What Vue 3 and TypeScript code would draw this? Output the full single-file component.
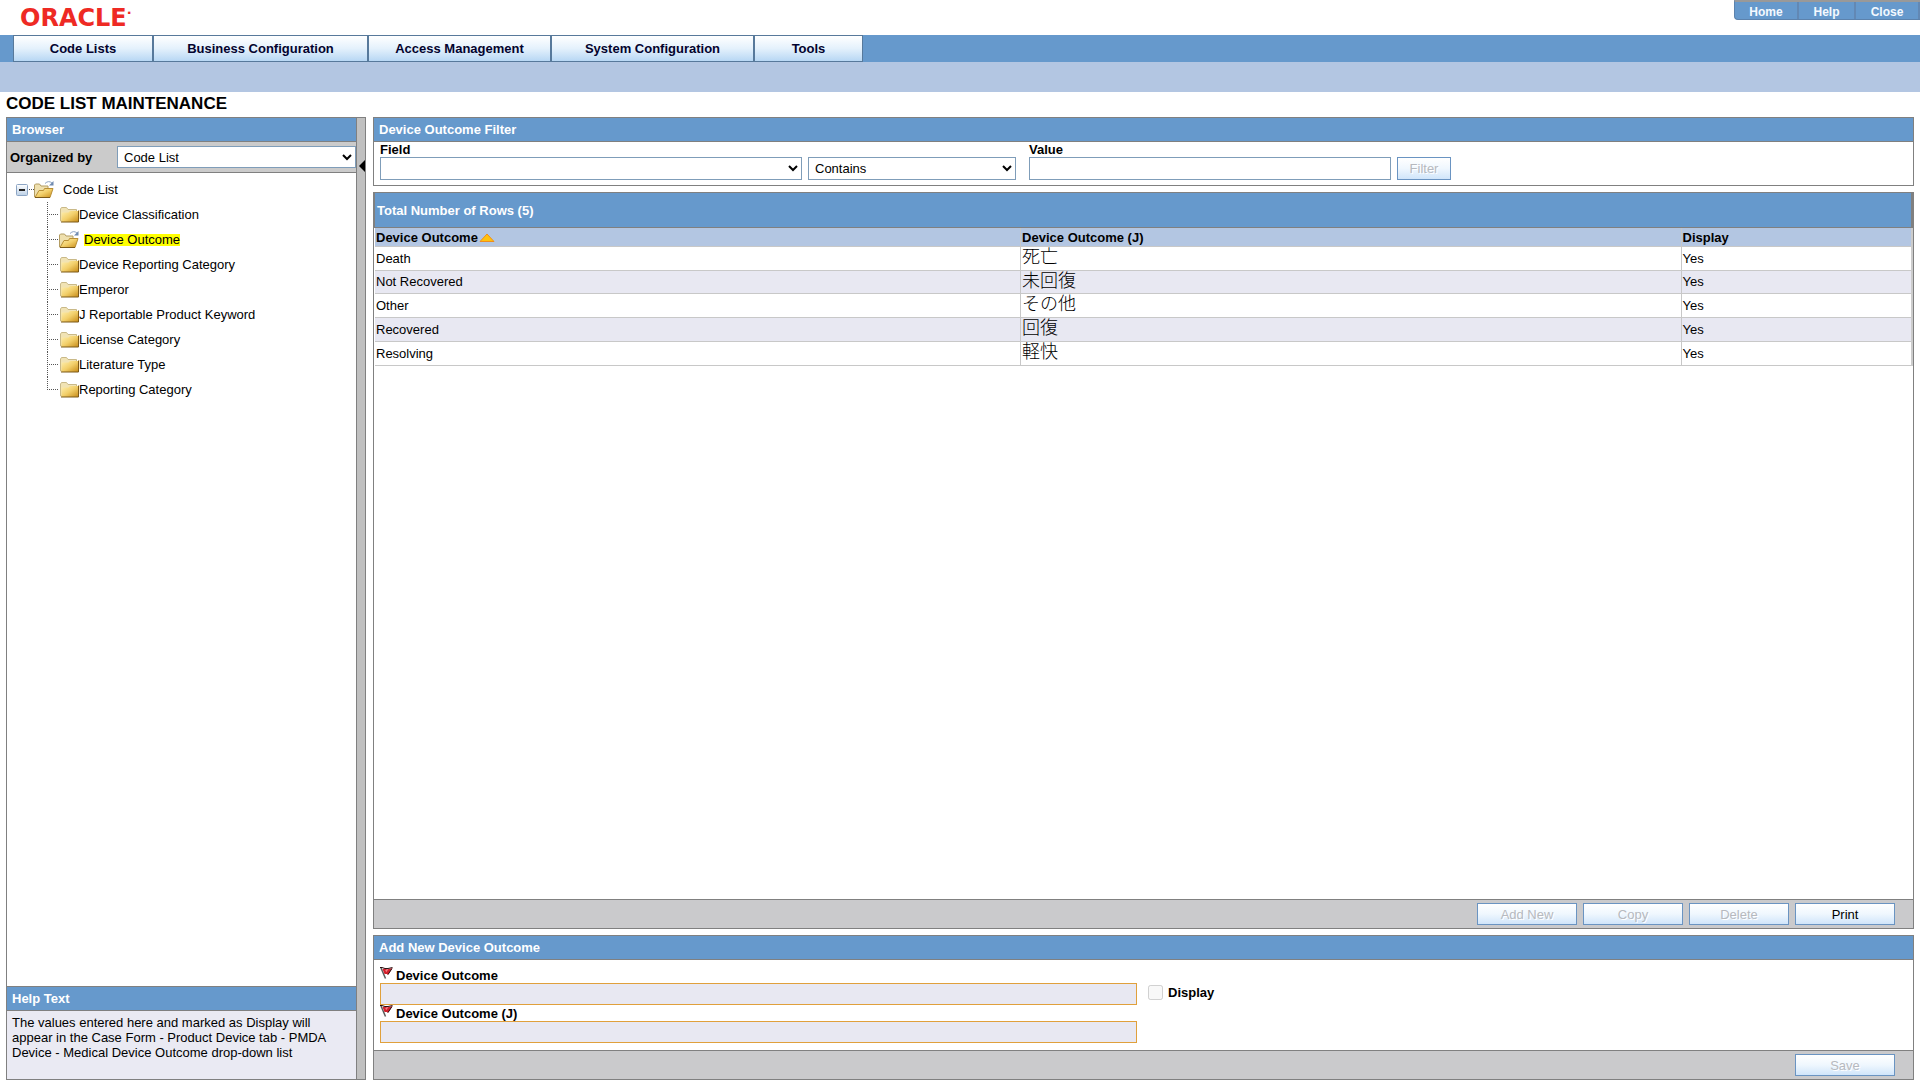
<script setup lang="ts">
import { ref } from 'vue'

interface Tab { label: string; width: number }
interface OutcomeRow { name: string; nameJ: string; display: string }

const links: string[] = ['Home', 'Help', 'Close']
const tabs: Tab[] = [
  { label: 'Code Lists', width: 140 },
  { label: 'Business Configuration', width: 215 },
  { label: 'Access Management', width: 183 },
  { label: 'System Configuration', width: 203 },
  { label: 'Tools', width: 109 },
]
const nodes: string[] = [
  'Device Classification',
  'Device Outcome',
  'Device Reporting Category',
  'Emperor',
  'J Reportable Product Keyword',
  'License Category',
  'Literature Type',
  'Reporting Category',
]
const selected = ref('Device Outcome')
const rows: OutcomeRow[] = [
  { name: 'Death', nameJ: '死亡', display: 'Yes' },
  { name: 'Not Recovered', nameJ: '未回復', display: 'Yes' },
  { name: 'Other', nameJ: 'その他', display: 'Yes' },
  { name: 'Recovered', nameJ: '回復', display: 'Yes' },
  { name: 'Resolving', nameJ: '軽快', display: 'Yes' },
]
const fields = [
  { id: 'outcome', label: 'Device Outcome' },
  { id: 'outcome-j', label: 'Device Outcome (J)' },
]
</script>

<template>
  <div class="page">
    <svg class="defs" width="0" height="0" aria-hidden="true">
      <defs>
        <linearGradient id="gold" x1="0" y1="0" x2="1" y2="1">
          <stop offset="0" stop-color="#fff0b0" />
          <stop offset="0.5" stop-color="#f2cf6a" />
          <stop offset="1" stop-color="#c88c18" />
        </linearGradient>
        <linearGradient id="box" x1="0" y1="0" x2="0" y2="1">
          <stop offset="0" stop-color="#ffffff" />
          <stop offset="1" stop-color="#bcd0e6" />
        </linearGradient>
        <symbol id="folder-open" viewBox="0 0 20 19">
          <path d="M0.500 17V5l1-1h4l1.500 2h7v4" fill="#efe0ae" stroke="#b39c62" />
          <path d="M1 17.500L5 10.500h4.500l1-2h8.500l-3 9z" fill="url(#gold)" stroke="#b98f35" />
          <path d="M1 17.500h15" stroke="#7d5a18" />
          <path d="M11 3.500q3.500-3.500 7-0.500" fill="none" stroke="#8ca2c2" />
          <path d="M19.500 1v4.500H15z" fill="#6f8ab0" />
        </symbol>
        <symbol id="folder" viewBox="0 0 19 16">
          <path d="M0.500 14V2l1-1.500h5l1.500 2h8.500v11z" fill="#f1e3b4" stroke="#c9b988" />
          <path d="M1.500 5.500h7l1.500-1.500h8v11H1.500z" fill="url(#gold)" />
          <path d="M1 15h17.500V3.500" fill="none" stroke="#7d5a18" />
        </symbol>
        <symbol id="flag" viewBox="0 0 13 12">
          <path d="M1 1l4.500 10.500" fill="none" stroke="#5a5a5a" stroke-width="1.500" />
          <path d="M2.500 2L5 1.500 7 2.500 12.500 1 8 8l-1-1H4.500z" fill="#d3202c" />
          <path d="M5 3.500l3-1-1.500 2.500z" fill="#f5858c" />
          <path d="M0 0.500h2l3 1h3l4.500-1M12 1.500L8 7.500" fill="none" stroke="#2a1011" />
        </symbol>
      </defs>
    </svg>

    <header class="top">
      <div class="logo">ORACLE<span>·</span></div>
      <nav class="links" aria-label="Session">
        <a v-for="link in links" :key="link" href="#">{{ link }}</a>
      </nav>
    </header>

    <nav class="tabs" aria-label="Main">
      <button v-for="tab in tabs" :key="tab.label" type="button" :style="{ width: tab.width + 'px' }">{{ tab.label }}</button>
    </nav>
    <div class="band"></div>
    <h1>CODE LIST MAINTENANCE</h1>

    <div class="work">
      <aside class="browser">
        <h2 class="bar">Browser</h2>
        <div class="organize">
          <label for="organized">Organized by</label>
          <select id="organized"><option>Code List</option></select>
        </div>
        <div class="tree">
          <div class="root">
            <svg class="toggle" viewBox="0 0 12 12" aria-hidden="true">
              <rect x="0.500" y="0.500" width="11" height="11" rx="1" fill="url(#box)" stroke="#8ca5c4" />
              <path d="M3 6h6" stroke="#222222" stroke-width="2" />
            </svg>
            <svg class="dash" viewBox="0 0 6 2" aria-hidden="true"><path d="M1 0.500h5" stroke="#555555" stroke-dasharray="1 1" /></svg>
            <svg class="open" aria-hidden="true"><use href="#folder-open" /></svg>
            <span class="root-name">Code List</span>
          </div>
          <div v-for="(node, i) in nodes" :key="node" class="node" @click="selected = node">
            <svg class="joint" viewBox="0 0 12 25" aria-hidden="true">
              <path :d="i === nodes.length - 1 ? 'M0.500 0v13' : 'M0.500 0v25'" stroke="#555555" stroke-dasharray="1 1" />
              <path d="M2 12.500h10" stroke="#555555" stroke-dasharray="1 1" />
            </svg>
            <template v-if="node === selected">
              <svg class="open" aria-hidden="true"><use href="#folder-open" /></svg>
              <a href="#" class="current">{{ node }}</a>
            </template>
            <template v-else>
              <svg class="closed" aria-hidden="true"><use href="#folder" /></svg>
              <a href="#">{{ node }}</a>
            </template>
          </div>
        </div>
        <h2 class="bar help-bar">Help Text</h2>
        <p class="help">The values entered here and marked as Display will appear in the Case Form - Product Device tab - PMDA Device - Medical Device Outcome drop-down list</p>
      </aside>

      <div class="splitter">
        <svg viewBox="0 0 6 12" aria-hidden="true"><path d="M6 0v12L0 6z" fill="#000000" /></svg>
      </div>

      <main>
        <section class="panel">
          <h2 class="bar">Device Outcome Filter</h2>
          <div class="filter">
            <div class="cell field">
              <label for="field">Field</label>
              <select id="field"><option></option></select>
            </div>
            <select class="operator" aria-label="Operator"><option>Contains</option></select>
            <div class="cell value">
              <label for="value">Value</label>
              <input id="value" type="text">
            </div>
            <button class="btn filter-btn" type="button" disabled>Filter</button>
          </div>
        </section>

        <section class="panel grid">
          <h2 class="bar total">Total Number of Rows (5)</h2>
          <div class="scroll">
            <table>
              <thead>
                <tr>
                  <th scope="col">Device Outcome<svg class="sort" viewBox="0 0 16 9" aria-hidden="true"><path d="M8 1l7 7.500H1z" fill="#ffc20e" stroke="#ee8d1c" /></svg></th>
                  <th scope="col">Device Outcome (J)</th>
                  <th scope="col">Display</th>
                </tr>
              </thead>
              <tbody>
                <tr v-for="row in rows" :key="row.name">
                  <td>{{ row.name }}</td>
                  <td lang="ja" class="ja">{{ row.nameJ }}</td>
                  <td>{{ row.display }}</td>
                </tr>
              </tbody>
            </table>
          </div>
          <div class="actions">
            <button class="btn" type="button" disabled>Add New</button>
            <button class="btn" type="button" disabled>Copy</button>
            <button class="btn" type="button" disabled>Delete</button>
            <button class="btn" type="button">Print</button>
          </div>
        </section>

        <section class="panel">
          <h2 class="bar">Add New Device Outcome</h2>
          <div class="form">
            <div class="inputs">
              <template v-for="f in fields" :key="f.id">
                <label :for="f.id"><svg class="flag" aria-hidden="true"><use href="#flag" /></svg>{{ f.label }}</label>
                <input :id="f.id" type="text" disabled>
              </template>
            </div>
            <label class="check"><input type="checkbox" disabled>Display</label>
          </div>
          <div class="actions">
            <button class="btn" type="button" disabled>Save</button>
          </div>
        </section>
      </main>
    </div>
  </div>
</template>

<style>
body {
  background: #ffffff;
}
</style>

<style scoped>
.page,
.page * {
  box-sizing: border-box;
}
.page {
  display: flex;
  flex-direction: column;
  min-height: 100vh;
  padding-bottom: 2px;
  font: 13px/15px "Liberation Sans", Arial, "Noto Sans CJK JP", sans-serif;
  color: #000000;
}
.defs {
  position: absolute;
}
.page svg {
  flex: none;
}
select,
input,
button {
  margin: 0;
  font: inherit;
  color: inherit;
  border-radius: 0;
}
a {
  color: inherit;
  text-decoration: none;
}

.top {
  display: flex;
  justify-content: space-between;
  align-items: flex-start;
  height: 35px;
}
.logo {
  padding: 6px 0 0 20px;
  font: bold 24px/24px "DejaVu Sans", sans-serif;
  color: #ee2a24;
}
.logo span {
  font-size: 13px;
  vertical-align: super;
  line-height: 1px;
}
.links {
  display: flex;
  height: 20px;
  background: #6699cc;
  border-top: 2px solid #999999;
  border-bottom: 1px solid #5c82ac;
  border-left: 1px solid #5c82ac;
  border-bottom-left-radius: 4px;
}
.links a {
  width: 57px;
  border-right: 2px solid #6288b4;
  text-align: center;
  font: bold 12px/20px "Liberation Sans", Arial, sans-serif;
  color: #f4f9ff;
}
.links a:first-child,
.links a:last-child {
  width: 64px;
}

.tabs {
  display: flex;
  height: 27px;
  padding-left: 13px;
  background: #6699cc;
}
.tabs button {
  padding: 0;
  border: 1px solid #57799b;
  background: linear-gradient(#ffffff, #e4f1fc 50%, #b8d7f4);
  font-weight: bold;
  color: #03032e;
}
.band {
  height: 30px;
  background: #b3c6e2;
}
h1 {
  margin: 0;
  padding: 2px 0 0 6px;
  height: 25px;
  font-size: 17px;
  line-height: 20px;
}

.work {
  flex: 1;
  display: flex;
  padding: 0 6px;
}
.bar {
  flex: none;
  margin: 0;
  height: 24px;
  padding-left: 5px;
  border-bottom: 1px solid #808080;
  background: #6699cc;
  font-size: 13px;
  line-height: 23px;
  color: #ffffff;
}
.browser {
  flex: none;
  width: 351px;
  display: flex;
  flex-direction: column;
  border: 1px solid #808080;
}
.organize {
  display: flex;
  align-items: center;
  height: 31px;
  padding-left: 3px;
  background: #cbcbcb;
  border-bottom: 1px solid #808080;
}
.organize label {
  width: 107px;
  font-weight: bold;
}
.organize select {
  flex: 1;
  height: 22px;
}
select {
  padding: 0 2px;
}
select,
.value input {
  border: 1px solid #7f9db9;
  background-color: #ffffff;
}
.tree {
  flex: 1;
  padding-top: 4px;
}
.root,
.node {
  display: flex;
  align-items: center;
  height: 25px;
}
.root {
  padding-left: 9px;
}
.node {
  padding-left: 40px;
}
.toggle {
  width: 12px;
  height: 12px;
}
.dash {
  width: 6px;
  height: 2px;
}
.open {
  width: 20px;
  height: 19px;
}
.root-name {
  margin-left: 9px;
}
.joint {
  width: 12px;
  height: 25px;
}
.node .closed {
  width: 19px;
  height: 16px;
  margin-left: 1px;
}
.current {
  margin-left: 5px;
  height: 12px;
  line-height: 12px;
  background: #ffff00;
}
.help-bar {
  height: 25px;
  border-top: 1px solid #808080;
}
.help {
  margin: 0;
  height: 68px;
  padding: 4px 5px;
  background: #eaeaf3;
}
.splitter {
  flex: none;
  display: flex;
  justify-content: flex-end;
  width: 9px;
  margin-right: 7px;
  padding-top: 42px;
  background: #c0c0c0;
  border: solid #808080;
  border-width: 1px 1px 1px 0;
}
.splitter svg {
  width: 6px;
  height: 12px;
}

main {
  flex: 1;
  min-width: 0;
  display: flex;
  flex-direction: column;
  gap: 6px;
}
.panel {
  border: 1px solid #808080;
}
.filter {
  display: flex;
  align-items: flex-end;
  gap: 6px;
  padding: 0 6px 5px;
}
.cell {
  display: flex;
  flex-direction: column;
  font-weight: bold;
}
.cell input,
.cell select,
.operator,
.filter-btn {
  height: 23px;
  font-weight: normal;
}
.field {
  width: 422px;
}
.operator {
  width: 208px;
}
.value {
  width: 362px;
  margin-left: 7px;
}
.btn {
  width: 100px;
  height: 22px;
  padding: 0;
  border: 1px solid #6a94c2;
  background: linear-gradient(#ffffff, #eff7fe 50%, #d0e5fa);
}
.btn:disabled {
  color: #b6b9bf;
  text-shadow: 1px 1px 0 #ffffff;
}
.filter-btn {
  width: 54px;
  height: 23px;
}

.grid {
  flex: 1;
  display: flex;
  flex-direction: column;
}
.total {
  height: 35px;
  padding-left: 2px;
  border-left: 1px solid #808080;
  border-right: 2px solid #808080;
  line-height: 35px;
}
.scroll {
  flex: 1;
  padding-left: 1px;
}
table {
  width: 100%;
  table-layout: fixed;
  border-collapse: separate;
  border-spacing: 0;
  border-right: 2px solid #cccccc;
}
th,
td {
  padding: 0 1px;
  border-bottom: 1px solid #c8c8c8;
  text-align: left;
}
th {
  height: 19px;
  background: #b3c6e2;
}
th:nth-child(1) {
  width: 42%;
}
th:nth-child(2) {
  width: 43%;
}
td {
  height: 24px;
  line-height: 23px;
}
tbody tr:nth-child(2) td {
  height: 23px;
  line-height: 22px;
}
th + th,
td + td {
  border-left: 1px solid #c8c8c8;
}
tbody td.ja,
tbody tr:nth-child(2) td.ja {
  font-size: 18px;
  font-weight: 300;
  line-height: 20px;
  vertical-align: top;
}
tbody tr:nth-child(even) {
  background: #e8e8f2;
}
.sort {
  width: 16px;
  height: 9px;
  margin-left: 1px;
}
.actions {
  flex: none;
  display: flex;
  justify-content: flex-end;
  align-items: center;
  gap: 6px;
  height: 29px;
  padding-right: 18px;
  border-top: 1px solid #808080;
  background: #cacacc;
}

.form {
  display: flex;
  gap: 11px;
  padding: 7px 6px;
  font-weight: bold;
}
.inputs {
  display: flex;
  flex-direction: column;
  width: 757px;
}
.inputs label {
  display: flex;
  align-items: flex-start;
  gap: 3px;
  height: 16px;
  line-height: 17px;
}
.flag {
  width: 13px;
  height: 12px;
}
.inputs input {
  height: 22px;
  border: 1px solid #e0a03c;
  background: #e8e8f2;
}
.check {
  display: flex;
  align-items: center;
  gap: 5px;
  height: 15px;
  margin-top: 18px;
}
.check input {
  width: 15px;
  height: 15px;
}
</style>
